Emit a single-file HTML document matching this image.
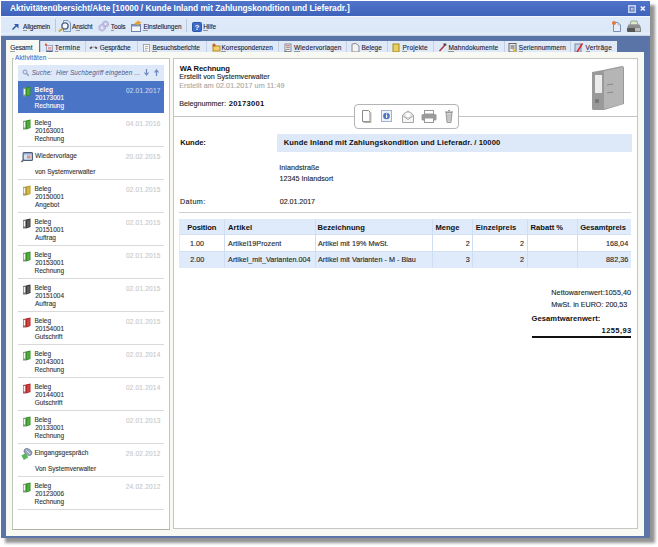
<!DOCTYPE html>
<html><head><meta charset="utf-8"><style>
html,body{margin:0;padding:0;}
body{width:658px;height:547px;position:relative;overflow:hidden;background:#fff;font-family:"Liberation Sans", sans-serif;}
.t{position:absolute;white-space:nowrap;line-height:1;}
u{text-decoration:none;border-bottom:0.6px solid rgba(0,0,0,.35);}
</style></head><body>
<div style="position:absolute;left:5px;top:5px;width:650px;height:538px;background:#000;opacity:.42;filter:blur(1.8px);"></div>
<div style="position:absolute;left:1px;top:1px;width:649px;height:537px;background:#5b74a8;"></div>
<div style="position:absolute;left:1px;top:1px;width:649px;height:15px;background:linear-gradient(#4f74c8,#3f63ba);"></div>
<div class="t" style="left:10.03px;top:4px;font-size:8.4px;font-weight:bold;color:#fff;letter-spacing:-0.028px;">Aktivitätenübersicht/Akte [10000 / Kunde Inland mit Zahlungskondition und Lieferadr.]</div>
<svg style="position:absolute;left:626px;top:3px" width="22" height="11"><rect x="2.8" y="2.8" width="6.4" height="6.4" fill="none" stroke="#c3d0ee" stroke-width="1.6"/><rect x="4.8" y="4.8" width="2.6" height="2.6" fill="#eef2fb"/><rect x="5.6" y="5.6" width="1" height="1" fill="#334"/><path d="M14.8 3.5 L18.8 7.5 M18.8 3.5 L14.8 7.5" stroke="#f2f5fc" stroke-width="1.5"/></svg>
<div style="position:absolute;left:1px;top:16px;width:649px;height:20px;background:linear-gradient(#f2f7fd 0px,#f2f7fd 1px,#dfeaf9 1px,#dce8f8 16px,#e9f3fb 18px,#c9d6ea 19.5px,#6d80ae 20px);"></div>
<div style="position:absolute;left:55px;top:19px;width:1px;height:13px;background:#bcc7da;"></div>
<div style="position:absolute;left:186px;top:19px;width:1px;height:13px;background:#bcc7da;"></div>
<div class="t" style="left:23.00px;top:24px;font-size:6.5px;font-weight:normal;color:#1b2233;letter-spacing:-0.172px;-webkit-text-stroke:0.1px currentColor;"><u>A</u>llgemein</div>
<div class="t" style="left:72.10px;top:24px;font-size:6.5px;font-weight:normal;color:#1b2233;letter-spacing:-0.138px;-webkit-text-stroke:0.1px currentColor;">A<u>n</u>sicht</div>
<div class="t" style="left:110.87px;top:24px;font-size:6.5px;font-weight:normal;color:#1b2233;letter-spacing:-0.112px;-webkit-text-stroke:0.1px currentColor;"><u>T</u>ools</div>
<div class="t" style="left:143.48px;top:24px;font-size:6.5px;font-weight:normal;color:#1b2233;letter-spacing:-0.079px;-webkit-text-stroke:0.1px currentColor;"><u>E</u>instellungen</div>
<div class="t" style="left:203.18px;top:24px;font-size:6.5px;font-weight:normal;color:#1b2233;letter-spacing:-0.012px;-webkit-text-stroke:0.1px currentColor;"><u>H</u>ilfe</div>
<svg style="position:absolute;left:11px;top:23px" width="9" height="8"><path d="M1.5 6.5 L5.5 2.5" stroke="#3558a8" stroke-width="1.6"/><path d="M3 1 L7.5 1 L7.5 5.5 Z" fill="#3558a8"/></svg>
<svg style="position:absolute;left:57px;top:19px" width="15" height="14"><path d="M6.5 1.5 H11 L13.5 4 V12.5 H6.5 Z" fill="#dde8f5" stroke="#7f98bf"/><circle cx="8" cy="7" r="3.1" fill="#f6f9fc" stroke="#4e6389" stroke-width="1.3"/><path d="M5.6 9.4 L1.8 12.6" stroke="#c9a84a" stroke-width="2"/></svg>
<svg style="position:absolute;left:98px;top:20px" width="12" height="12"><circle cx="7.5" cy="4" r="3" fill="#c4c0e4" stroke="#9490bf" stroke-width=".8" stroke-dasharray="1.2 .6"/><circle cx="4" cy="7.8" r="3.2" fill="#cdc9ea" stroke="#9490bf" stroke-width=".8" stroke-dasharray="1.2 .6"/><circle cx="4" cy="7.8" r="1" fill="#f4f4fb"/><circle cx="7.5" cy="4" r=".9" fill="#f4f4fb"/></svg>
<svg style="position:absolute;left:130px;top:20px" width="12" height="12"><rect x="1.5" y="4.5" width="9" height="7" fill="#f4f6fa" stroke="#6f84a8"/><rect x="1.5" y="4.5" width="9" height="2" fill="#7f95bd"/><path d="M4 4 L8 0.5 L11.5 2.5 L8 5 Z" fill="#e6a42a"/></svg>
<svg style="position:absolute;left:192px;top:22px" width="10" height="10"><rect x="0.5" y="0.5" width="9" height="9" rx="1" fill="#3d6dc8" stroke="#2d56a6"/><text x="5" y="8" font-family="Liberation Sans" font-weight="bold" font-size="7.5" fill="#fff" text-anchor="middle">?</text></svg>
<svg style="position:absolute;left:611px;top:20px" width="11" height="13"><path d="M2.5 2.5 L7 2.5 L9.5 5 L9.5 11.5 L2.5 11.5 Z" fill="#e4ecf8" stroke="#7d8fb0"/><path d="M7 2.5 L7 5 L9.5 5" fill="none" stroke="#9fb0cc" stroke-width=".7"/><circle cx="3" cy="3" r="2" fill="#e2783a"/></svg>
<svg style="position:absolute;left:626px;top:20px" width="16" height="13"><path d="M5 1 L11 1 L12 5 L4 5 Z" fill="#dce9cc" stroke="#7d8a76" stroke-width=".7"/><path d="M2.5 4.5 L13.5 4.5 L15 7.5 L1 7.5 Z" fill="#8f9190"/><rect x="1" y="7.5" width="14" height="4.5" rx="1" fill="#555857"/><rect x="9" y="8" width="5.5" height="3.5" fill="#b9bcbb"/></svg>
<div style="position:absolute;left:40px;top:41px;width:45px;height:11px;background:#dfe9f7;border-left:1px solid #c3cfe3;box-sizing:border-box;"></div>
<div class="t" style="left:54.87px;top:45px;font-size:6.5px;font-weight:normal;color:#1b2233;letter-spacing:0.374px;-webkit-text-stroke:0.1px currentColor;"><u>T</u>ermine</div>
<svg style="position:absolute;left:44px;top:42.5px" width="10" height="10"><rect x="2.5" y="2.5" width="6" height="6" fill="#e4e9f2" stroke="#8b98b2" stroke-width=".8"/><rect x="2.5" y="7.5" width="6" height="1.5" fill="#56648a"/><rect x="4" y="4" width="3.5" height="2.5" fill="#e8a0a0"/><circle cx="2" cy="1.8" r="1.2" fill="#e06040"/></svg>
<div style="position:absolute;left:85px;top:41px;width:52px;height:11px;background:#dfe9f7;border-left:1px solid #c3cfe3;box-sizing:border-box;"></div>
<div class="t" style="left:99.67px;top:45px;font-size:6.5px;font-weight:normal;color:#1b2233;letter-spacing:-0.092px;-webkit-text-stroke:0.1px currentColor;">G<u>e</u>spräche</div>
<svg style="position:absolute;left:89px;top:42.5px" width="10" height="10"><path d="M1 5.5 L3 4 M6 4 L8 5.5" stroke="#555" stroke-width="1.8"/><path d="M3 4.2 H6" stroke="#999" stroke-width=".8"/></svg>
<div style="position:absolute;left:137px;top:41px;width:69px;height:11px;background:#dfe9f7;border-left:1px solid #c3cfe3;box-sizing:border-box;"></div>
<div class="t" style="left:152.48px;top:45px;font-size:6.5px;font-weight:normal;color:#1b2233;letter-spacing:-0.050px;-webkit-text-stroke:0.1px currentColor;"><u>B</u>esuchsberichte</div>
<svg style="position:absolute;left:142px;top:42.5px" width="10" height="10"><rect x="1.5" y="1.5" width="6" height="7.5" fill="#f6f6f6" stroke="#9a9a9a" stroke-width=".8"/><path d="M3 3.5 H6 M3 5.5 H6 M3 7.3 H5" stroke="#999" stroke-width=".7"/></svg>
<div style="position:absolute;left:206px;top:41px;width:72px;height:11px;background:#dfe9f7;border-left:1px solid #c3cfe3;box-sizing:border-box;"></div>
<div class="t" style="left:221.48px;top:45px;font-size:6.5px;font-weight:normal;color:#1b2233;letter-spacing:0.005px;-webkit-text-stroke:0.1px currentColor;"><u>K</u>orrespondenzen</div>
<svg style="position:absolute;left:211px;top:42.5px" width="10" height="10"><rect x="2" y="3" width="7" height="5" fill="#f2cf6a" stroke="#b88a20"/><circle cx="3" cy="2" r="1.6" fill="#c4602a"/></svg>
<div style="position:absolute;left:278px;top:41px;width:68px;height:11px;background:#dfe9f7;border-left:1px solid #c3cfe3;box-sizing:border-box;"></div>
<div class="t" style="left:294.00px;top:45px;font-size:6.5px;font-weight:normal;color:#1b2233;letter-spacing:0.142px;-webkit-text-stroke:0.1px currentColor;"><u>W</u>iedervorlagen</div>
<svg style="position:absolute;left:283px;top:42.5px" width="10" height="10"><rect x="2" y="1" width="6" height="7.5" fill="#eef0f6" stroke="#777" stroke-width=".8"/><path d="M3.2 2.8 H6.8" stroke="#d44" stroke-width=".9"/><path d="M3.2 4.6 H6.8 M3.2 6.4 H6.8" stroke="#777" stroke-width=".8"/><path d="M1 9.5 L3 7.5" stroke="#666" stroke-width="1"/></svg>
<div style="position:absolute;left:346px;top:41px;width:41px;height:11px;background:#dfe9f7;border-left:1px solid #c3cfe3;box-sizing:border-box;"></div>
<div class="t" style="left:361.48px;top:45px;font-size:6.5px;font-weight:normal;color:#1b2233;letter-spacing:0.003px;-webkit-text-stroke:0.1px currentColor;">Be<u>l</u>ege</div>
<svg style="position:absolute;left:351px;top:42.5px" width="10" height="10"><path d="M1 1 L5 0.5 L8 3 L8 9 L1 9 Z" fill="#f2f2f2" stroke="#8a8a8a"/></svg>
<div style="position:absolute;left:387px;top:41px;width:46px;height:11px;background:#dfe9f7;border-left:1px solid #c3cfe3;box-sizing:border-box;"></div>
<div class="t" style="left:402.48px;top:45px;font-size:6.5px;font-weight:normal;color:#1b2233;letter-spacing:0.201px;-webkit-text-stroke:0.1px currentColor;"><u>P</u>rojekte</div>
<svg style="position:absolute;left:392px;top:42.5px" width="10" height="10"><rect x="1" y="1" width="6" height="8" fill="#e8cf60" stroke="#a68a22"/></svg>
<div style="position:absolute;left:433px;top:41px;width:71px;height:11px;background:#dfe9f7;border-left:1px solid #c3cfe3;box-sizing:border-box;"></div>
<div class="t" style="left:448.48px;top:45px;font-size:6.5px;font-weight:normal;color:#1b2233;letter-spacing:0.111px;-webkit-text-stroke:0.1px currentColor;"><u>M</u>ahndokumente</div>
<svg style="position:absolute;left:438px;top:42.5px" width="10" height="10"><path d="M1.5 8 L7 2" stroke="#a33" stroke-width="1.4"/><path d="M5 1 L8 0.5 L8 3" stroke="#999" stroke-width="1"/></svg>
<div style="position:absolute;left:504px;top:41px;width:66px;height:11px;background:#dfe9f7;border-left:1px solid #c3cfe3;box-sizing:border-box;"></div>
<div class="t" style="left:518.74px;top:45px;font-size:6.5px;font-weight:normal;color:#1b2233;letter-spacing:0.074px;-webkit-text-stroke:0.1px currentColor;"><u>S</u>eriennummern</div>
<svg style="position:absolute;left:508px;top:42.5px" width="10" height="10"><rect x="1" y="0.5" width="7" height="8.5" fill="#eaeaea" stroke="#666"/><path d="M2.5 3 H6.5 M2.5 5 H6.5" stroke="#555"/><path d="M5 6 L8 9" stroke="#e8b820" stroke-width="1.6"/></svg>
<div style="position:absolute;left:570px;top:41px;width:47px;height:11px;background:#dfe9f7;border-left:1px solid #c3cfe3;box-sizing:border-box;"></div>
<div class="t" style="left:585.50px;top:45px;font-size:6.5px;font-weight:normal;color:#1b2233;letter-spacing:0.238px;-webkit-text-stroke:0.1px currentColor;"><u>V</u>erträge</div>
<svg style="position:absolute;left:574px;top:42.5px" width="10" height="10"><rect x="1" y="1" width="6" height="8" fill="#c8d4e8" stroke="#7a8aa8"/><path d="M3 9 L8.5 0.5" stroke="#e02020" stroke-width="1.4"/></svg>
<div style="position:absolute;left:6px;top:52px;width:638px;height:484px;background:#f9f9f4;"></div>
<div style="position:absolute;left:6px;top:40px;width:33px;height:13px;background:#f9f9f4;"></div>
<div class="t" style="left:10.18px;top:45px;font-size:6.5px;font-weight:normal;color:#1b2233;letter-spacing:-0.089px;-webkit-text-stroke:0.1px currentColor;"><u>G</u>esamt</div>
<div style="position:absolute;left:12px;top:58px;width:158px;height:472px;border:1px solid #c4c4bc;border-bottom-color:#b0b0a8;box-sizing:border-box;"></div>
<div style="position:absolute;left:13px;top:59px;width:156px;height:470px;background:#fff;"></div>
<div style="position:absolute;left:14px;top:53px;width:34px;height:5px;background:#f9f9f4;"></div>
<div style="position:absolute;left:14px;top:58px;width:34px;height:4px;background:#fff;"></div>
<div class="t" style="left:15.00px;top:55px;font-size:6.5px;font-weight:normal;color:#4a6cc0;letter-spacing:0.138px;-webkit-text-stroke:0.1px currentColor;">Aktivitäten</div>
<div style="position:absolute;left:18px;top:65px;width:146px;height:16px;background:#dde8f8;"></div>
<svg style="position:absolute;left:22px;top:69px" width="8" height="8"><circle cx="3" cy="3" r="2" fill="none" stroke="#8597bd" stroke-width="1"/><path d="M4.5 4.5 L6.8 6.8" stroke="#8597bd" stroke-width="1.3"/></svg>
<svg style="position:absolute;left:143px;top:68px" width="17" height="9"><path d="M3.5 1 V7 M1.5 4.5 L3.5 7 L5.5 4.5" stroke="#6d86bd" stroke-width="1.2" fill="none"/><path d="M13.5 8 V2 M11.5 4.5 L13.5 2 L15.5 4.5" stroke="#6d86bd" stroke-width="1.2" fill="none"/></svg>
<div class="t" style="left:31.67px;top:70px;font-size:6.4px;font-weight:normal;color:#44598f;letter-spacing:0.109px;font-style:italic;">Suche:</div>
<div class="t" style="left:55.91px;top:70px;font-size:6.4px;font-weight:normal;color:#44598f;letter-spacing:0.105px;font-style:italic;">Hier Suchbegriff eingeben ...</div>
<div style="position:absolute;left:18px;top:81px;width:146px;height:32px;background:#4a74c6;"></div>
<div class="t" style="left:34.60px;top:87px;font-size:6.6px;font-weight:bold;color:#fff;letter-spacing:0.100px;">Beleg</div>
<div class="t" style="left:35.17px;top:95px;font-size:6.5px;font-weight:normal;color:#fff;letter-spacing:0.000px;-webkit-text-stroke:0.1px currentColor;">20173001</div>
<div class="t" style="left:34.48px;top:103px;font-size:6.5px;font-weight:normal;color:#fff;letter-spacing:0.000px;-webkit-text-stroke:0.1px currentColor;">Rechnung</div>
<div class="t" style="left:125.91px;top:88px;font-size:6.5px;font-weight:normal;color:#c8d5f0;letter-spacing:0.218px;-webkit-text-stroke:0.1px currentColor;">02.01.2017</div>
<svg style="position:absolute;left:22px;top:86px" width="10" height="11"><path d="M1 2 L4 1.5 L4 10.5 L1 10.5 Z" fill="#7f9a7a"/><rect x="1.7" y="3" width="1.5" height="5.5" fill="#f4f8f0"/><path d="M4 1.5 L8.5 0.5 L8.5 9 L4 10.5 Z" fill="#2f8a22"/><path d="M4.8 2.5 L7.8 1.6 L7.8 8.6 L4.8 9.5 Z" fill="#6cc052" opacity=".6"/></svg>
<div style="position:absolute;left:18px;top:146px;width:146px;height:1px;background:#d9d9d9;"></div>
<div class="t" style="left:34.48px;top:120px;font-size:6.5px;font-weight:normal;color:#333;letter-spacing:0.000px;-webkit-text-stroke:0.1px currentColor;">Beleg</div>
<div class="t" style="left:35.17px;top:128px;font-size:6.5px;font-weight:normal;color:#333;letter-spacing:0.000px;-webkit-text-stroke:0.1px currentColor;">20163001</div>
<div class="t" style="left:34.48px;top:136px;font-size:6.5px;font-weight:normal;color:#333;letter-spacing:0.000px;-webkit-text-stroke:0.1px currentColor;">Rechnung</div>
<div class="t" style="left:125.91px;top:121px;font-size:6.5px;font-weight:normal;color:#c8c8c8;letter-spacing:0.211px;-webkit-text-stroke:0.1px currentColor;">04.01.2016</div>
<svg style="position:absolute;left:22px;top:119px" width="10" height="11"><path d="M1 2 L4 1.5 L4 10.5 L1 10.5 Z" fill="#7f9a7a"/><rect x="1.7" y="3" width="1.5" height="5.5" fill="#f4f8f0"/><path d="M4 1.5 L8.5 0.5 L8.5 9 L4 10.5 Z" fill="#2f8a22"/><path d="M4.8 2.5 L7.8 1.6 L7.8 8.6 L4.8 9.5 Z" fill="#6cc052" opacity=".6"/></svg>
<div style="position:absolute;left:18px;top:179px;width:146px;height:1px;background:#d9d9d9;"></div>
<div class="t" style="left:35.00px;top:153px;font-size:6.5px;font-weight:normal;color:#333;letter-spacing:0.000px;-webkit-text-stroke:0.1px currentColor;">Wiedervorlage</div>
<div class="t" style="left:35.00px;top:169px;font-size:6.5px;font-weight:normal;color:#333;letter-spacing:0.000px;-webkit-text-stroke:0.1px currentColor;">von Systemverwalter</div>
<div class="t" style="left:125.77px;top:154px;font-size:6.5px;font-weight:normal;color:#c8c8c8;letter-spacing:0.225px;-webkit-text-stroke:0.1px currentColor;">20.02.2015</div>
<svg style="position:absolute;left:21px;top:152px" width="12" height="11"><rect x="2" y="0.5" width="9.5" height="8" rx="0.5" fill="#8fa6c8" stroke="#4b5e80"/><rect x="3" y="2.5" width="7.5" height="5" fill="#d8e2f0"/><rect x="6" y="3.5" width="3.5" height="3" fill="#d89484"/><path d="M0.5 10 L3 7.5" stroke="#666" stroke-width="1.6"/></svg>
<div style="position:absolute;left:18px;top:212px;width:146px;height:1px;background:#d9d9d9;"></div>
<div class="t" style="left:34.48px;top:186px;font-size:6.5px;font-weight:normal;color:#333;letter-spacing:0.000px;-webkit-text-stroke:0.1px currentColor;">Beleg</div>
<div class="t" style="left:35.17px;top:194px;font-size:6.5px;font-weight:normal;color:#333;letter-spacing:0.000px;-webkit-text-stroke:0.1px currentColor;">20150001</div>
<div class="t" style="left:35.00px;top:202px;font-size:6.5px;font-weight:normal;color:#333;letter-spacing:0.000px;-webkit-text-stroke:0.1px currentColor;">Angebot</div>
<div class="t" style="left:125.91px;top:187px;font-size:6.5px;font-weight:normal;color:#c8c8c8;letter-spacing:0.211px;-webkit-text-stroke:0.1px currentColor;">02.01.2015</div>
<svg style="position:absolute;left:22px;top:185px" width="10" height="11"><path d="M1 2 L4 1.5 L4 10.5 L1 10.5 Z" fill="#a89a60"/><rect x="1.7" y="3" width="1.5" height="5.5" fill="#f4f8f0"/><path d="M4 1.5 L8.5 0.5 L8.5 9 L4 10.5 Z" fill="#b09320"/><path d="M4.8 2.5 L7.8 1.6 L7.8 8.6 L4.8 9.5 Z" fill="#e8d060" opacity=".6"/></svg>
<div style="position:absolute;left:18px;top:245px;width:146px;height:1px;background:#d9d9d9;"></div>
<div class="t" style="left:34.48px;top:219px;font-size:6.5px;font-weight:normal;color:#333;letter-spacing:0.000px;-webkit-text-stroke:0.1px currentColor;">Beleg</div>
<div class="t" style="left:35.17px;top:227px;font-size:6.5px;font-weight:normal;color:#333;letter-spacing:0.000px;-webkit-text-stroke:0.1px currentColor;">20151001</div>
<div class="t" style="left:35.00px;top:235px;font-size:6.5px;font-weight:normal;color:#333;letter-spacing:0.000px;-webkit-text-stroke:0.1px currentColor;">Auftrag</div>
<div class="t" style="left:125.91px;top:220px;font-size:6.5px;font-weight:normal;color:#c8c8c8;letter-spacing:0.211px;-webkit-text-stroke:0.1px currentColor;">02.01.2015</div>
<svg style="position:absolute;left:22px;top:218px" width="10" height="11"><path d="M1 2 L4 1.5 L4 10.5 L1 10.5 Z" fill="#777"/><rect x="1.7" y="3" width="1.5" height="5.5" fill="#f4f8f0"/><path d="M4 1.5 L8.5 0.5 L8.5 9 L4 10.5 Z" fill="#333"/><path d="M4.8 2.5 L7.8 1.6 L7.8 8.6 L4.8 9.5 Z" fill="#777" opacity=".6"/></svg>
<div style="position:absolute;left:18px;top:278px;width:146px;height:1px;background:#d9d9d9;"></div>
<div class="t" style="left:34.48px;top:252px;font-size:6.5px;font-weight:normal;color:#333;letter-spacing:0.000px;-webkit-text-stroke:0.1px currentColor;">Beleg</div>
<div class="t" style="left:35.17px;top:260px;font-size:6.5px;font-weight:normal;color:#333;letter-spacing:0.000px;-webkit-text-stroke:0.1px currentColor;">20153001</div>
<div class="t" style="left:34.48px;top:268px;font-size:6.5px;font-weight:normal;color:#333;letter-spacing:0.000px;-webkit-text-stroke:0.1px currentColor;">Rechnung</div>
<div class="t" style="left:125.91px;top:253px;font-size:6.5px;font-weight:normal;color:#c8c8c8;letter-spacing:0.211px;-webkit-text-stroke:0.1px currentColor;">02.01.2015</div>
<svg style="position:absolute;left:22px;top:251px" width="10" height="11"><path d="M1 2 L4 1.5 L4 10.5 L1 10.5 Z" fill="#7f9a7a"/><rect x="1.7" y="3" width="1.5" height="5.5" fill="#f4f8f0"/><path d="M4 1.5 L8.5 0.5 L8.5 9 L4 10.5 Z" fill="#2f8a22"/><path d="M4.8 2.5 L7.8 1.6 L7.8 8.6 L4.8 9.5 Z" fill="#6cc052" opacity=".6"/></svg>
<div style="position:absolute;left:18px;top:311px;width:146px;height:1px;background:#d9d9d9;"></div>
<div class="t" style="left:34.48px;top:285px;font-size:6.5px;font-weight:normal;color:#333;letter-spacing:0.000px;-webkit-text-stroke:0.1px currentColor;">Beleg</div>
<div class="t" style="left:35.17px;top:293px;font-size:6.5px;font-weight:normal;color:#333;letter-spacing:0.000px;-webkit-text-stroke:0.1px currentColor;">20151004</div>
<div class="t" style="left:35.00px;top:301px;font-size:6.5px;font-weight:normal;color:#333;letter-spacing:0.000px;-webkit-text-stroke:0.1px currentColor;">Auftrag</div>
<div class="t" style="left:125.91px;top:286px;font-size:6.5px;font-weight:normal;color:#c8c8c8;letter-spacing:0.211px;-webkit-text-stroke:0.1px currentColor;">02.01.2015</div>
<svg style="position:absolute;left:22px;top:284px" width="10" height="11"><path d="M1 2 L4 1.5 L4 10.5 L1 10.5 Z" fill="#777"/><rect x="1.7" y="3" width="1.5" height="5.5" fill="#f4f8f0"/><path d="M4 1.5 L8.5 0.5 L8.5 9 L4 10.5 Z" fill="#333"/><path d="M4.8 2.5 L7.8 1.6 L7.8 8.6 L4.8 9.5 Z" fill="#777" opacity=".6"/></svg>
<div style="position:absolute;left:18px;top:344px;width:146px;height:1px;background:#d9d9d9;"></div>
<div class="t" style="left:34.48px;top:318px;font-size:6.5px;font-weight:normal;color:#333;letter-spacing:0.000px;-webkit-text-stroke:0.1px currentColor;">Beleg</div>
<div class="t" style="left:35.17px;top:326px;font-size:6.5px;font-weight:normal;color:#333;letter-spacing:0.000px;-webkit-text-stroke:0.1px currentColor;">20154001</div>
<div class="t" style="left:34.67px;top:334px;font-size:6.5px;font-weight:normal;color:#333;letter-spacing:0.000px;-webkit-text-stroke:0.1px currentColor;">Gutschrift</div>
<div class="t" style="left:125.91px;top:319px;font-size:6.5px;font-weight:normal;color:#c8c8c8;letter-spacing:0.211px;-webkit-text-stroke:0.1px currentColor;">02.01.2015</div>
<svg style="position:absolute;left:22px;top:317px" width="10" height="11"><path d="M1 2 L4 1.5 L4 10.5 L1 10.5 Z" fill="#a06060"/><rect x="1.7" y="3" width="1.5" height="5.5" fill="#f4f8f0"/><path d="M4 1.5 L8.5 0.5 L8.5 9 L4 10.5 Z" fill="#b01c1c"/><path d="M4.8 2.5 L7.8 1.6 L7.8 8.6 L4.8 9.5 Z" fill="#e05a5a" opacity=".6"/></svg>
<div style="position:absolute;left:18px;top:377px;width:146px;height:1px;background:#d9d9d9;"></div>
<div class="t" style="left:34.48px;top:351px;font-size:6.5px;font-weight:normal;color:#333;letter-spacing:0.000px;-webkit-text-stroke:0.1px currentColor;">Beleg</div>
<div class="t" style="left:35.17px;top:359px;font-size:6.5px;font-weight:normal;color:#333;letter-spacing:0.000px;-webkit-text-stroke:0.1px currentColor;">20143001</div>
<div class="t" style="left:34.48px;top:367px;font-size:6.5px;font-weight:normal;color:#333;letter-spacing:0.000px;-webkit-text-stroke:0.1px currentColor;">Rechnung</div>
<div class="t" style="left:125.91px;top:352px;font-size:6.5px;font-weight:normal;color:#c8c8c8;letter-spacing:0.204px;-webkit-text-stroke:0.1px currentColor;">02.01.2014</div>
<svg style="position:absolute;left:22px;top:350px" width="10" height="11"><path d="M1 2 L4 1.5 L4 10.5 L1 10.5 Z" fill="#7f9a7a"/><rect x="1.7" y="3" width="1.5" height="5.5" fill="#f4f8f0"/><path d="M4 1.5 L8.5 0.5 L8.5 9 L4 10.5 Z" fill="#2f8a22"/><path d="M4.8 2.5 L7.8 1.6 L7.8 8.6 L4.8 9.5 Z" fill="#6cc052" opacity=".6"/></svg>
<div style="position:absolute;left:18px;top:410px;width:146px;height:1px;background:#d9d9d9;"></div>
<div class="t" style="left:34.48px;top:384px;font-size:6.5px;font-weight:normal;color:#333;letter-spacing:0.000px;-webkit-text-stroke:0.1px currentColor;">Beleg</div>
<div class="t" style="left:35.17px;top:392px;font-size:6.5px;font-weight:normal;color:#333;letter-spacing:0.000px;-webkit-text-stroke:0.1px currentColor;">20144001</div>
<div class="t" style="left:34.67px;top:400px;font-size:6.5px;font-weight:normal;color:#333;letter-spacing:0.000px;-webkit-text-stroke:0.1px currentColor;">Gutschrift</div>
<div class="t" style="left:125.91px;top:385px;font-size:6.5px;font-weight:normal;color:#c8c8c8;letter-spacing:0.204px;-webkit-text-stroke:0.1px currentColor;">02.01.2014</div>
<svg style="position:absolute;left:22px;top:383px" width="10" height="11"><path d="M1 2 L4 1.5 L4 10.5 L1 10.5 Z" fill="#a06060"/><rect x="1.7" y="3" width="1.5" height="5.5" fill="#f4f8f0"/><path d="M4 1.5 L8.5 0.5 L8.5 9 L4 10.5 Z" fill="#b01c1c"/><path d="M4.8 2.5 L7.8 1.6 L7.8 8.6 L4.8 9.5 Z" fill="#e05a5a" opacity=".6"/></svg>
<div style="position:absolute;left:18px;top:443px;width:146px;height:1px;background:#d9d9d9;"></div>
<div class="t" style="left:34.48px;top:417px;font-size:6.5px;font-weight:normal;color:#333;letter-spacing:0.000px;-webkit-text-stroke:0.1px currentColor;">Beleg</div>
<div class="t" style="left:35.17px;top:425px;font-size:6.5px;font-weight:normal;color:#333;letter-spacing:0.000px;-webkit-text-stroke:0.1px currentColor;">20133001</div>
<div class="t" style="left:34.48px;top:433px;font-size:6.5px;font-weight:normal;color:#333;letter-spacing:0.000px;-webkit-text-stroke:0.1px currentColor;">Rechnung</div>
<div class="t" style="left:125.91px;top:418px;font-size:6.5px;font-weight:normal;color:#c8c8c8;letter-spacing:0.211px;-webkit-text-stroke:0.1px currentColor;">02.01.2013</div>
<svg style="position:absolute;left:22px;top:416px" width="10" height="11"><path d="M1 2 L4 1.5 L4 10.5 L1 10.5 Z" fill="#7f9a7a"/><rect x="1.7" y="3" width="1.5" height="5.5" fill="#f4f8f0"/><path d="M4 1.5 L8.5 0.5 L8.5 9 L4 10.5 Z" fill="#2f8a22"/><path d="M4.8 2.5 L7.8 1.6 L7.8 8.6 L4.8 9.5 Z" fill="#6cc052" opacity=".6"/></svg>
<div style="position:absolute;left:18px;top:476px;width:146px;height:1px;background:#d9d9d9;"></div>
<div class="t" style="left:34.48px;top:450px;font-size:6.5px;font-weight:normal;color:#333;letter-spacing:0.000px;-webkit-text-stroke:0.1px currentColor;">Eingangsgespräch</div>
<div class="t" style="left:35.00px;top:466px;font-size:6.5px;font-weight:normal;color:#333;letter-spacing:0.000px;-webkit-text-stroke:0.1px currentColor;">Von Systemverwalter</div>
<div class="t" style="left:125.77px;top:451px;font-size:6.5px;font-weight:normal;color:#c8c8c8;letter-spacing:0.233px;-webkit-text-stroke:0.1px currentColor;">29.02.2012</div>
<svg style="position:absolute;left:21px;top:448px" width="12" height="12"><ellipse cx="7" cy="4" rx="4.3" ry="3" transform="rotate(30 7 4)" fill="#9aa6bf" stroke="#6a7690" stroke-width=".7"/><path d="M5.5 2.5 L9 6" stroke="#e4e9f3" stroke-width="1"/><rect x="1.3" y="6" width="5" height="5" transform="rotate(-30 3.8 8.5)" fill="#58b858"/></svg>
<div style="position:absolute;left:18px;top:509px;width:146px;height:1px;background:#d9d9d9;"></div>
<div class="t" style="left:34.48px;top:483px;font-size:6.5px;font-weight:normal;color:#333;letter-spacing:0.000px;-webkit-text-stroke:0.1px currentColor;">Beleg</div>
<div class="t" style="left:35.17px;top:491px;font-size:6.5px;font-weight:normal;color:#333;letter-spacing:0.000px;-webkit-text-stroke:0.1px currentColor;">20123006</div>
<div class="t" style="left:34.48px;top:499px;font-size:6.5px;font-weight:normal;color:#333;letter-spacing:0.000px;-webkit-text-stroke:0.1px currentColor;">Rechnung</div>
<div class="t" style="left:125.77px;top:484px;font-size:6.5px;font-weight:normal;color:#c8c8c8;letter-spacing:0.233px;-webkit-text-stroke:0.1px currentColor;">24.02.2012</div>
<svg style="position:absolute;left:22px;top:482px" width="10" height="11"><path d="M1 2 L4 1.5 L4 10.5 L1 10.5 Z" fill="#7f9a7a"/><rect x="1.7" y="3" width="1.5" height="5.5" fill="#f4f8f0"/><path d="M4 1.5 L8.5 0.5 L8.5 9 L4 10.5 Z" fill="#2f8a22"/><path d="M4.8 2.5 L7.8 1.6 L7.8 8.6 L4.8 9.5 Z" fill="#6cc052" opacity=".6"/></svg>
<div style="position:absolute;left:173px;top:58px;width:465px;height:471px;background:#fff;border:1px solid #c6c6c6;box-sizing:border-box;"></div>
<div class="t" style="left:179.80px;top:65px;font-size:7.6px;font-weight:bold;color:#111;letter-spacing:-0.105px;">WA Rechnung</div>
<div class="t" style="left:179.22px;top:73px;font-size:7.2px;font-weight:normal;color:#262626;letter-spacing:-0.006px;-webkit-text-stroke:0.12px currentColor;">Erstellt von Systemverwalter</div>
<div class="t" style="left:179.22px;top:82px;font-size:7.2px;font-weight:normal;color:#a8a8a8;letter-spacing:0.063px;-webkit-text-stroke:0.12px currentColor;">Erstellt am 02.01.2017 um 11:49</div>
<div class="t" style="left:179.22px;top:100px;font-size:7.2px;font-weight:normal;color:#262626;letter-spacing:-0.001px;-webkit-text-stroke:0.12px currentColor;">Belegnummer:</div>
<div class="t" style="left:228.67px;top:100px;font-size:7.6px;font-weight:bold;color:#111;letter-spacing:0.259px;">20173001</div>
<div style="position:absolute;left:174px;top:116px;width:463px;height:1px;background:#c4c4c4;"></div>
<div style="position:absolute;left:354px;top:104px;width:105px;height:25px;background:#fff;border:1px solid #b4b4b4;border-radius:4px;box-sizing:border-box;"></div>
<svg style="position:absolute;left:358px;top:107px" width="100" height="18"><path d="M4.5 3.5 L10.5 3.5 L12 5 L12 14.5 L4.5 14.5 Z" fill="#fdfdfd" stroke="#8a8a8a"/><path d="M12.8 5.5 L12.8 15.3 L5.5 15.3" stroke="#b0b0b0" stroke-width="1.2" fill="none"/><rect x="23.5" y="3.5" width="10" height="11" fill="#eef3fa" stroke="#9db2d6"/><circle cx="28.5" cy="9" r="3.3" fill="#4b74bd"/><rect x="28" y="8" width="1.2" height="3" fill="#fff"/><rect x="28" y="6.3" width="1.2" height="1.1" fill="#fff"/><path d="M44.5 8 L50 4 L55.5 8 L55.5 15.5 L44.5 15.5 Z" fill="#f6f6f6" stroke="#a5a5a5"/><rect x="47" y="5.5" width="6" height="5" fill="#fff" stroke="#bbb" stroke-width=".7"/><path d="M44.5 8.5 L50 12.5 L55.5 8.5" stroke="#a5a5a5" fill="none"/><rect x="63.5" y="7" width="15" height="6.5" rx="1.5" fill="#9a9a9a"/><rect x="66.5" y="3.5" width="9" height="3.5" fill="#fff" stroke="#999"/><rect x="66.5" y="11" width="9" height="4.5" fill="#fff" stroke="#999"/><path d="M87 5 H95" stroke="#9a9a9a" stroke-width="1.2"/><path d="M88 5.5 L89 15.5 H93 L94 5.5 Z" fill="#d5d5d5" stroke="#9a9a9a"/><path d="M90 7 V14 M92 7 V14" stroke="#aaa" stroke-width=".7"/><path d="M90 3.5 H92" stroke="#9a9a9a" stroke-width="1.2"/></svg>
<svg style="position:absolute;left:591px;top:65px" width="34" height="46"><path d="M1 7 L12 5 L31 1 Q33 1 33 3 L33 39 L13 45 L2 45 Q1 45 1 43 Z" fill="#9a9a9a"/><path d="M13 6 L32 2 L32 39 L13 44 Z" fill="#b5b5b5"/><rect x="4" y="10" width="7" height="18" fill="#ececec"/><circle cx="6" cy="36" r="2.2" fill="#777"/><path d="M16 20 L22 19 M16 28 L22 27" stroke="#888" stroke-width="1"/></svg>
<div style="position:absolute;left:276.5px;top:133.5px;width:355px;height:18.7px;background:#dde9f9;"></div>
<div class="t" style="left:180.14px;top:139px;font-size:7.6px;font-weight:bold;color:#111;letter-spacing:-0.082px;">Kunde:</div>
<div class="t" style="left:283.74px;top:139px;font-size:7.6px;font-weight:bold;color:#111;letter-spacing:0.091px;">Kunde Inland mit Zahlungskondition und Lieferadr. / 10000</div>
<div class="t" style="left:279.35px;top:164px;font-size:7.2px;font-weight:normal;color:#262626;letter-spacing:-0.001px;-webkit-text-stroke:0.12px currentColor;">Inlandstraße</div>
<div class="t" style="left:279.50px;top:175px;font-size:7.2px;font-weight:normal;color:#262626;letter-spacing:0.016px;-webkit-text-stroke:0.12px currentColor;">12345 Inlandsort</div>
<div class="t" style="left:180.02px;top:198px;font-size:7.2px;font-weight:normal;color:#262626;letter-spacing:0.400px;-webkit-text-stroke:0.12px currentColor;">Datum:</div>
<div class="t" style="left:279.78px;top:198px;font-size:7.2px;font-weight:normal;color:#262626;letter-spacing:-0.076px;-webkit-text-stroke:0.12px currentColor;">02.01.2017</div>
<div style="position:absolute;left:179px;top:212px;width:452px;height:1px;background:#cfcfcf;"></div>
<div style="position:absolute;left:179px;top:219px;width:452px;height:49px;background:#dfeafa;"></div>
<div style="position:absolute;left:180px;top:235px;width:451px;height:16px;background:#fff;"></div>
<div style="position:absolute;left:179px;top:234px;width:452px;height:1px;background:#d2e0f4;"></div>
<div style="position:absolute;left:179px;top:251px;width:452px;height:1px;background:#d2e0f4;"></div>
<div style="position:absolute;left:224px;top:219px;width:1px;height:49px;background:#d0def3;"></div>
<div style="position:absolute;left:315px;top:219px;width:1px;height:49px;background:#d0def3;"></div>
<div style="position:absolute;left:432px;top:219px;width:1px;height:49px;background:#d0def3;"></div>
<div style="position:absolute;left:472px;top:219px;width:1px;height:49px;background:#d0def3;"></div>
<div style="position:absolute;left:527px;top:219px;width:1px;height:49px;background:#d0def3;"></div>
<div style="position:absolute;left:577px;top:219px;width:1px;height:49px;background:#d0def3;"></div>
<div class="t" style="left:187.24px;top:224px;font-size:7.6px;font-weight:bold;color:#111;letter-spacing:-0.123px;">Position</div>
<div class="t" style="left:227.95px;top:224px;font-size:7.6px;font-weight:bold;color:#111;letter-spacing:0.086px;">Artikel</div>
<div class="t" style="left:317.54px;top:224px;font-size:7.6px;font-weight:bold;color:#111;letter-spacing:0.006px;">Bezeichnung</div>
<div class="t" style="left:435.54px;top:224px;font-size:7.6px;font-weight:bold;color:#111;letter-spacing:-0.058px;">Menge</div>
<div class="t" style="left:475.74px;top:224px;font-size:7.6px;font-weight:bold;color:#111;letter-spacing:0.043px;">Einzelpreis</div>
<div class="t" style="left:530.54px;top:224px;font-size:7.6px;font-weight:bold;color:#111;letter-spacing:0.010px;">Rabatt %</div>
<div class="t" style="left:580.20px;top:224px;font-size:7.6px;font-weight:bold;color:#111;letter-spacing:-0.027px;">Gesamtpreis</div>
<div class="t" style="left:190.00px;top:240px;font-size:7.2px;font-weight:normal;color:#262626;letter-spacing:0.030px;-webkit-text-stroke:0.12px currentColor;">1.00</div>
<div class="t" style="left:228.10px;top:240px;font-size:7.2px;font-weight:normal;color:#262626;letter-spacing:0.030px;-webkit-text-stroke:0.12px currentColor;">Artikel19Prozent</div>
<div class="t" style="left:318.00px;top:240px;font-size:7.2px;font-weight:normal;color:#262626;letter-spacing:0.030px;-webkit-text-stroke:0.12px currentColor;">Artikel mit 19% MwSt.</div>
<div class="t" style="left:465.83px;top:240px;font-size:7.2px;font-weight:normal;color:#262626;letter-spacing:0.000px;-webkit-text-stroke:0.12px currentColor;">2</div>
<div class="t" style="left:520.03px;top:240px;font-size:7.2px;font-weight:normal;color:#262626;letter-spacing:0.000px;-webkit-text-stroke:0.12px currentColor;">2</div>
<div class="t" style="left:606.02px;top:240px;font-size:7.2px;font-weight:normal;color:#262626;letter-spacing:0.030px;-webkit-text-stroke:0.12px currentColor;">168,04</div>
<div class="t" style="left:190.14px;top:256px;font-size:7.2px;font-weight:normal;color:#262626;letter-spacing:0.030px;-webkit-text-stroke:0.12px currentColor;">2.00</div>
<div class="t" style="left:228.10px;top:256px;font-size:7.2px;font-weight:normal;color:#262626;letter-spacing:0.030px;-webkit-text-stroke:0.12px currentColor;">Artikel_mit_Varianten.004</div>
<div class="t" style="left:318.00px;top:256px;font-size:7.2px;font-weight:normal;color:#262626;letter-spacing:0.030px;-webkit-text-stroke:0.12px currentColor;">Artikel mit Varianten - M - Blau</div>
<div class="t" style="left:465.76px;top:256px;font-size:7.2px;font-weight:normal;color:#262626;letter-spacing:0.000px;-webkit-text-stroke:0.12px currentColor;">3</div>
<div class="t" style="left:520.03px;top:256px;font-size:7.2px;font-weight:normal;color:#262626;letter-spacing:0.000px;-webkit-text-stroke:0.12px currentColor;">2</div>
<div class="t" style="left:606.09px;top:256px;font-size:7.2px;font-weight:normal;color:#262626;letter-spacing:0.030px;-webkit-text-stroke:0.12px currentColor;">882,36</div>
<div class="t" style="left:551.32px;top:289px;font-size:7.2px;font-weight:normal;color:#262626;letter-spacing:0.071px;-webkit-text-stroke:0.12px currentColor;">Nettowarenwert:1055,40</div>
<div class="t" style="left:551.32px;top:301px;font-size:7.2px;font-weight:normal;color:#262626;letter-spacing:-0.015px;-webkit-text-stroke:0.12px currentColor;">MwSt. in EURO: 200,53</div>
<div class="t" style="left:531.60px;top:315px;font-size:7.6px;font-weight:bold;color:#111;letter-spacing:0.047px;">Gesamtwarenwert:</div>
<div class="t" style="left:601.54px;top:327px;font-size:7.6px;font-weight:bold;color:#111;letter-spacing:0.376px;">1255,93</div>
<div style="position:absolute;left:532px;top:336px;width:99px;height:2px;background:#111;"></div>
</body></html>
